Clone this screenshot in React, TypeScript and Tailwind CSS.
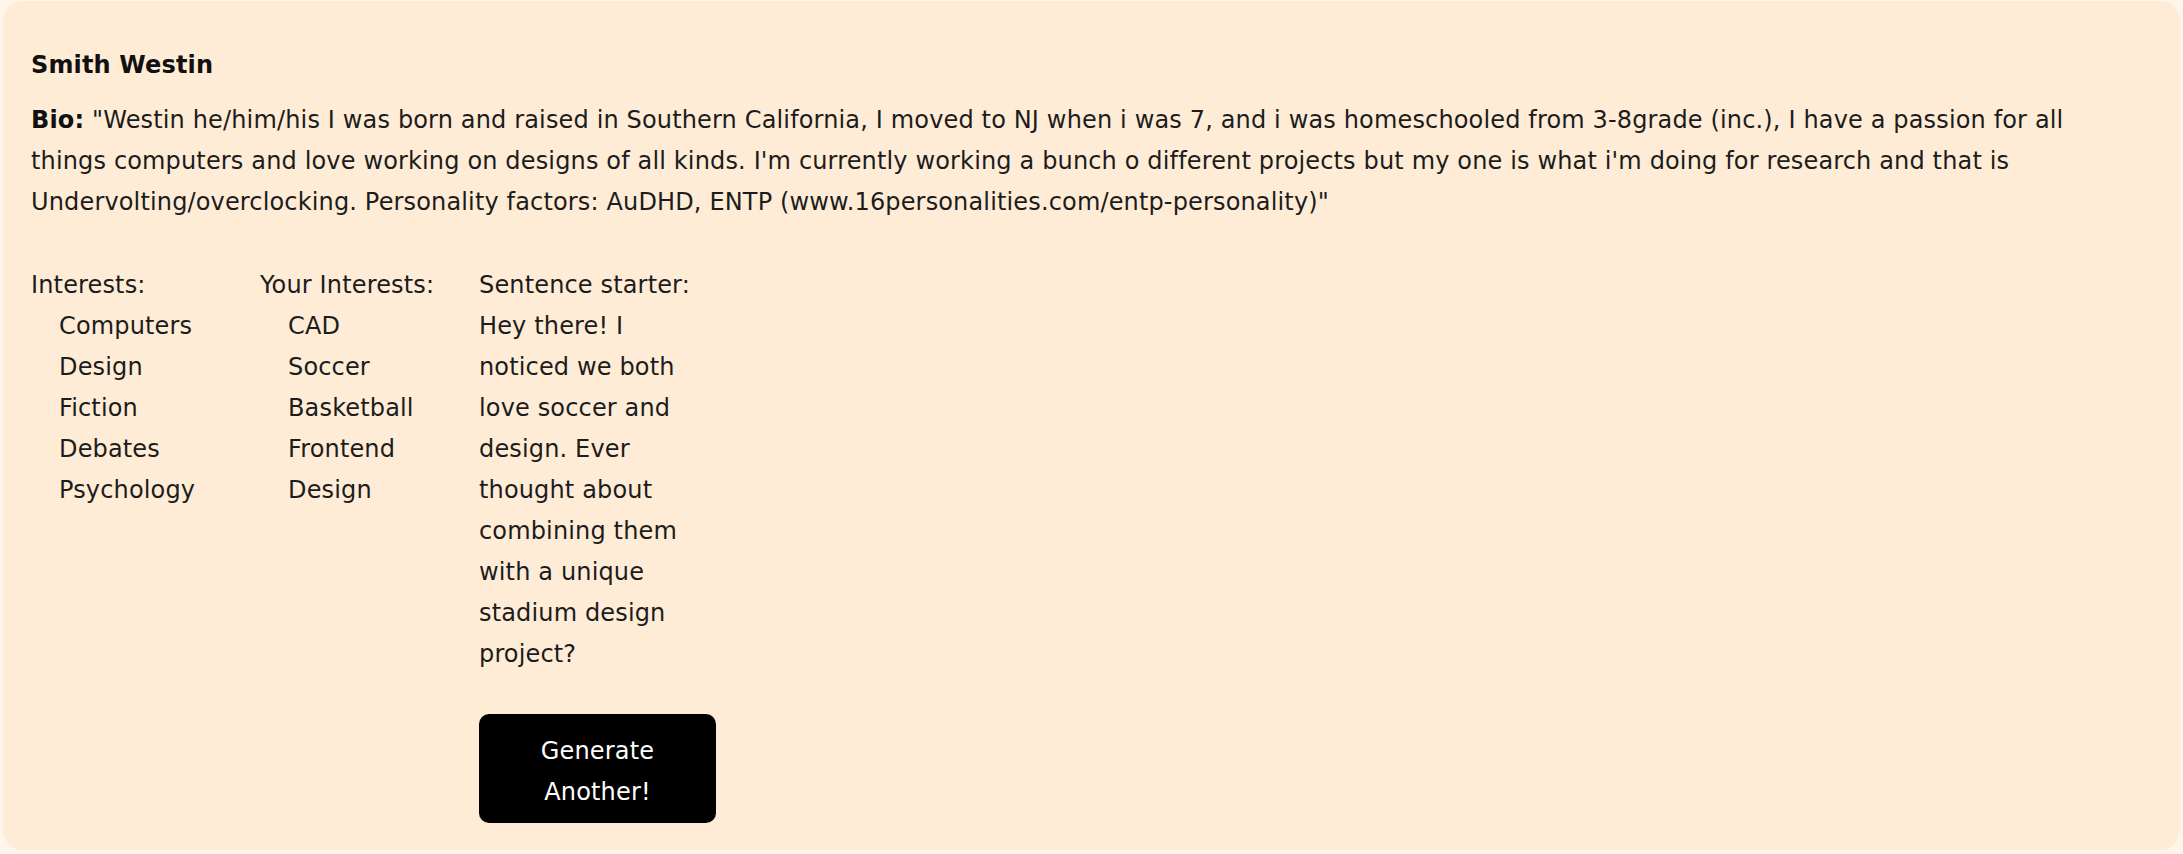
import React from "react";

const interests = ["Computers", "Design", "Fiction", "Debates", "Psychology"];
const yours = ["CAD", "Soccer", "Basketball", "Frontend", "Design"];

export default function App() {
  return (
    <div className="min-h-screen w-full bg-[#fff5eb] px-[3px] pt-[1px] pb-[4px]" style={{ fontFamily: '"DejaVu Sans", "Liberation Sans", sans-serif' }}>
      <div className="h-[849px] rounded-[20px] bg-[#ffecd6] px-[28px] pt-[44px] text-[24px] leading-[41px] tracking-[0.15px] text-[#1c1c1c]">
        <h2 className="font-bold text-[24px] leading-[41px] text-[#111]">Smith Westin</h2>
        <p className="mt-[14px]">
          <span className="font-bold text-[#111]">Bio:</span> "Westin he/him/his I was born and raised in Southern California, I moved to NJ when i was 7, and i was homeschooled from 3-8grade (inc.), I have a passion for all
          <br />
          things computers and love working on designs of all kinds. I'm currently working a bunch o different projects but my one is what i'm doing for research and that is
          <br />
          Undervolting/overclocking. Personality factors: AuDHD, ENTP (www.16personalities.com/entp-personality)"
        </p>
        <div className="mt-[42px] flex">
          <div className="w-[229px]">
            <div>Interests:</div>
            <ul className="pl-[28px]">
              {interests.map((i) => (
                <li key={i}>{i}</li>
              ))}
            </ul>
          </div>
          <div className="w-[219px]">
            <div>Your Interests:</div>
            <ul className="pl-[28px]">
              {yours.map((i) => (
                <li key={i}>{i}</li>
              ))}
            </ul>
          </div>
          <div className="w-[237px]">
            <div>Sentence starter:</div>
            <p>
              Hey there! I noticed we both love soccer and design. Ever thought about combining them with a unique stadium design project?
            </p>
            <button className="mt-[39px] w-[237px] rounded-[10px] bg-black px-[40px] pt-[17px] pb-[10px] text-[24px] leading-[41px] text-white">
              Generate Another!
            </button>
          </div>
        </div>
      </div>
    </div>
  );
}
